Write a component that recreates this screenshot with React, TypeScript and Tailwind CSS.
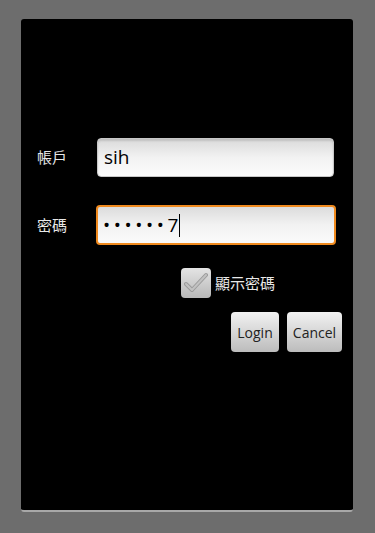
import React from 'react';

const font = { fontFamily: '"Open Sans", "Noto Sans CJK TC", sans-serif' };

export default function App() {
  return (
    <div className="w-[375px] h-[533px] bg-[#6d6d6d] pt-[19px] pl-[21px]" style={font}>
      <div className="w-[332px] h-[493px] bg-black rounded-[3px] border-b-2 border-[#a8a8a8] flex flex-col">
        {/* 帳戶 */}
        <div className="flex items-center mt-[119px] h-[39px]">
          <span className="w-[76px] pl-4 text-[#e8e8e8] text-[15px]">帳戶</span>
          <div className="w-[237px] h-[39px] rounded-[4px] border border-[#c8c8c8] bg-gradient-to-b from-[#dadada] via-[#f2f2f2] to-[#fbfbfb] shadow-[inset_0_2px_2px_rgba(0,0,0,0.12)] flex items-center pl-[6px]">
            <span className="text-[19px] text-black leading-none">sih</span>
          </div>
        </div>

        {/* 密碼 */}
        <div className="flex items-center mt-[28px] h-[40px]">
          <span className="w-[75px] pl-4 text-[#e8e8e8] text-[15px]">密碼</span>
          <div className="w-[240px] h-[40px] rounded-[4px] border-2 border-[#f08a1e] bg-gradient-to-b from-[#dcdcdc] via-[#f2f2f2] to-[#fbfbfb] flex items-center pl-[5px]">
            <span className="text-[19px] text-black leading-none tracking-[3.6px]">••••••</span>
            <span className="text-[19px] text-black leading-none">7</span>
            <span className="w-px h-[23px] bg-black ml-[1px]"></span>
          </div>
        </div>

        {/* 顯示密碼 */}
        <div className="flex items-center mt-[23px] ml-[160px] h-[30px]">
          <div className="w-[30px] h-[30px] rounded-[4px] bg-gradient-to-b from-[#e4e4e4] to-[#b8b8b8] flex items-center justify-center">
            <svg width="24" height="22" viewBox="0 0 24 22">
              <path d="M2 12 L8 18 L22 3" fill="none" stroke="#9a9a9a" strokeWidth="4" strokeLinejoin="round" strokeLinecap="round" />
              <path d="M2 12 L8 18 L22 3" fill="none" stroke="#c2c2c2" strokeWidth="2" strokeLinejoin="round" strokeLinecap="round" />
            </svg>
          </div>
          <span className="ml-[4px] text-[#e8e8e8] text-[15px]">顯示密碼</span>
        </div>

        {/* buttons */}
        <div className="flex justify-end gap-2 mt-[14px] mr-[11px]">
          <button className="w-[48px] h-[40px] rounded-[4px] bg-gradient-to-b from-[#f2f2f2] to-[#bcbcbc] text-[14px] text-[#222]">Login</button>
          <button className="w-[55px] h-[40px] rounded-[4px] bg-gradient-to-b from-[#f2f2f2] to-[#bcbcbc] text-[14px] text-[#222]">Cancel</button>
        </div>
      </div>
    </div>
  );
}
